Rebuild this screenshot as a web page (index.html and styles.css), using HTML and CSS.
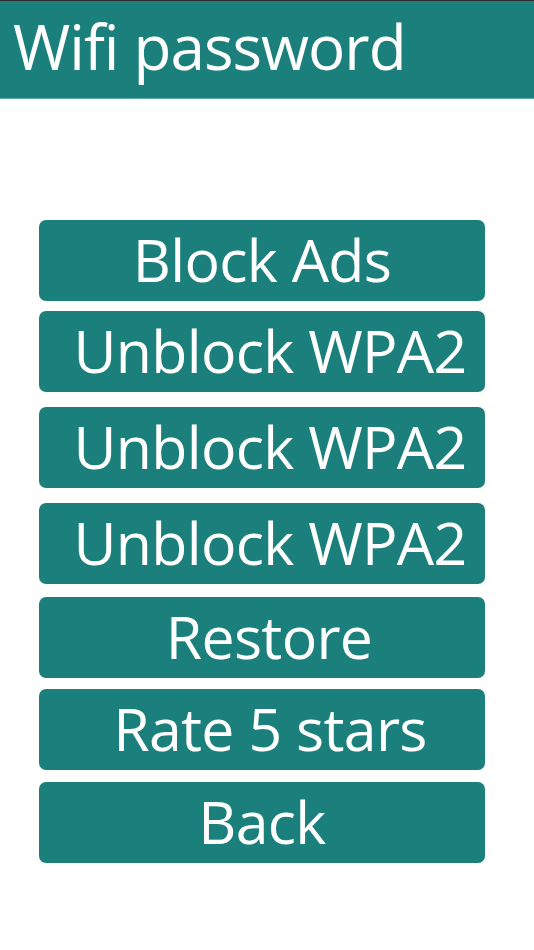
FILE: index.html
```html
<!DOCTYPE html>
<html>
<head>
<meta charset="utf-8">
<link rel="stylesheet" href="styles.css">
</head>
<body>
<header class="topbar">
  <h1 class="title">Wifi password</h1>
</header>
<main class="menu">
  <button class="btn">Block Ads</button>
  <button class="btn btn-shift">Unblock WPA2</button>
  <button class="btn btn-shift">Unblock WPA2</button>
  <button class="btn btn-shift">Unblock WPA2</button>
  <button class="btn btn-shift-sm">Restore</button>
  <button class="btn btn-shift">Rate 5 stars</button>
  <button class="btn">Back</button>
</main>
</body>
</html>
```

FILE: styles.css
```css
html, body {
  margin: 0;
  padding: 0;
  background: #ffffff;
}
body {
  width: 534px;
  font-family: "Open Sans", "Noto Sans", sans-serif;
}
.topbar {
  height: 97px;
  background: #1b807c;
  border-top: 1px solid #2b2b2b;
  border-bottom: 1px solid #5fa9a6;
  display: flex;
  align-items: center;
}
.title {
  margin: 0 0 0 13px;
  color: #ffffff;
  font-size: 62px;
  font-weight: 400;
  line-height: 1;
  letter-spacing: -1px;
  padding-bottom: 8px;
}
.menu {
  display: flex;
  flex-direction: column;
  padding: 121px 0 0 39px;
}
.btn {
  width: 446px;
  height: 81px;
  margin: 0 0 10px 0;
  padding: 0 0 2px 0;
  border: none;
  border-radius: 7px;
  background: #1b807c;
  color: #ffffff;
  font-family: "Open Sans", "Noto Sans", sans-serif;
  font-size: 59px;
  font-weight: 400;
  letter-spacing: -0.7px;
  line-height: 1;
  display: flex;
  align-items: center;
  justify-content: center;
}
.btn-shift { padding-left: 16px; }
.btn-shift-sm { padding-left: 14px; }
.btn:nth-child(2) { margin-bottom: 15px; }
.btn:nth-child(3) { margin-bottom: 15px; }
.btn:nth-child(4) { margin-bottom: 13px; }
.btn:nth-child(5) { margin-bottom: 11px; }
.btn:nth-child(6) { margin-bottom: 12px; }
```
